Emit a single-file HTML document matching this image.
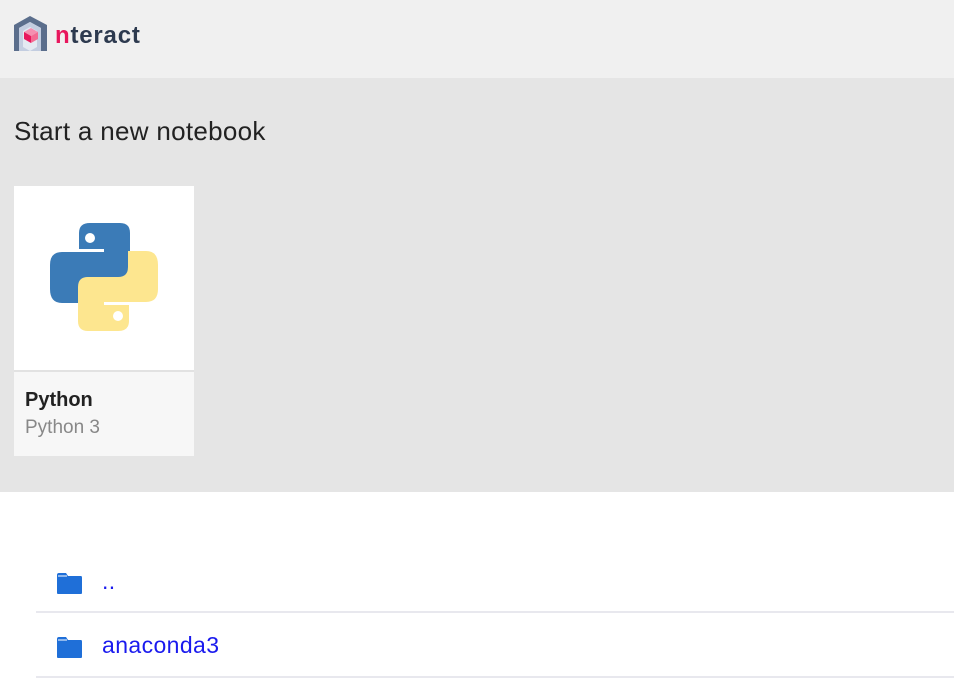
<!DOCTYPE html>
<html><head><style>
body{margin:0;width:954px;height:680px;overflow:hidden;font-family:"Liberation Sans",sans-serif;background:#fff;position:relative}
.hdr{position:absolute;left:0;top:0;width:954px;height:78px;background:#f0f0f0}
.sec{position:absolute;left:0;top:78px;width:954px;height:414px;background:#e5e5e5}
.title{position:absolute;left:14px;top:116px;font-size:26px;letter-spacing:0.3px;color:#222}
.card{position:absolute;left:14px;top:186px;width:180px;height:270px;background:#f7f7f7}
.img{position:absolute;left:0;top:0;width:180px;height:184px;background:#fff;border-bottom:2px solid #e2e2e2}
.n1{position:absolute;left:25px;top:389px;font-size:20px;font-weight:bold;color:#222}
.n2{position:absolute;left:25px;top:417px;font-size:19px;color:#888}
.row{position:absolute;left:36px;width:918px;height:2px;background:#e8e8ee}
.lnk{position:absolute;left:102px;font-size:23px;letter-spacing:0.4px;color:#1a1aee}
.fold{position:absolute;left:56px}
</style></head><body>
<div class="hdr">
<svg style="position:absolute;left:13px;top:15px" width="36" height="37" viewBox="0 0 36 37">
<path d="M1,10 L17,1 L34,10 L34,36 L28,36 L28,13 L17,7 L6,13 L6,36 L1,36 Z" fill="#5b6e8c"/>
<path d="M6,13 L17,7 L28,13 L28,36 L6,36 Z" fill="#c3cde0"/>
<path d="M10,16 L17,12 L24,16 L24,32 L17,36 L10,32 Z" fill="#e4e9f2"/>
<path d="M11,17 L18,13 L25,17 L18,21 Z" fill="#f58fb0"/>
<path d="M11,17 L18,21 L18,28 L11,24 Z" fill="#e8175d"/>
<path d="M18,21 L25,17 L25,24 L18,28 Z" fill="#f46a92"/>
</svg>
<div style="position:absolute;left:55px;top:22px;font-size:24px;font-weight:bold;color:#2d3a4f;letter-spacing:0.8px"><span style="color:#e8175d">n</span>teract</div>
</div>
<div class="sec"></div>
<div class="title">Start a new notebook</div>
<div class="card"><div class="img">
<svg style="position:absolute;left:36px;top:37px" width="108" height="108" viewBox="0 0 108 108">
<path d="M29,10 Q29,0 40,0 L70,0 Q80,0 80,10 L80,44 Q80,54 70,54 L40,54 Q30,54 30,64 L30,80 L12,80 Q0,80 0,66 L0,42 Q0,29 12,29 L54,29 L54,26 L29,26 Z" fill="#3b7bb7"/>
<circle cx="40" cy="15" r="5" fill="#fff"/>
<g transform="rotate(180 54 54)">
<path d="M29,10 Q29,0 40,0 L70,0 Q80,0 80,10 L80,44 Q80,54 70,54 L40,54 Q30,54 30,64 L30,80 L12,80 Q0,80 0,66 L0,42 Q0,29 12,29 L54,29 L54,26 L29,26 Z" fill="#fde68f"/>
<circle cx="40" cy="15" r="5" fill="#fff"/>
</g>
</svg></div></div>
<div class="n1">Python</div>
<div class="n2">Python 3</div>
<svg class="fold" style="top:572px" width="27" height="23" viewBox="0 0 27 23"><path d="M1,3 Q1,1 3,1 L10,1 L12,4 L25,4 Q26,4 26,6 L26,21 Q26,22 25,22 L2,22 Q1,22 1,21 Z" fill="#1f6fd8"/><path d="M2,4 L11,4" stroke="#fff" stroke-width="1"/></svg>
<div class="lnk" style="top:568px">..</div>
<div class="row" style="top:611px"></div>
<svg class="fold" style="top:636px" width="27" height="23" viewBox="0 0 27 23"><path d="M1,3 Q1,1 3,1 L10,1 L12,4 L25,4 Q26,4 26,6 L26,21 Q26,22 25,22 L2,22 Q1,22 1,21 Z" fill="#1f6fd8"/><path d="M2,4 L11,4" stroke="#fff" stroke-width="1"/></svg>
<div class="lnk" style="top:632px">anaconda3</div>
<div class="row" style="top:676px"></div>
</body></html>
